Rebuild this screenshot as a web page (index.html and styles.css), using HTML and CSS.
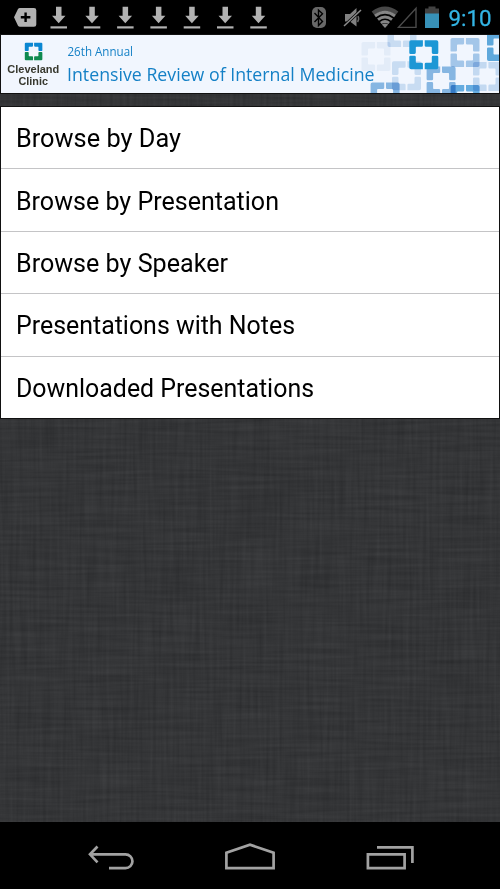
FILE: index.html
```html
<!DOCTYPE html>
<html lang="en">
<head>
<meta charset="utf-8">
<title>Intensive Review of Internal Medicine</title>
<link rel="stylesheet" href="styles.css">
</head>
<body>
<div class="screen">
  <header class="status">
    <svg class="status-icons" width="500" height="34" viewBox="0 0 500 34">
      <defs>
        <g id="download"><path d="M5.500 0h5.500v9h4L8.200 16.500 1.500 9h4z"/><path d="M0 19.500h16.500v2.200H0z"/></g>
      </defs>
      <path fill="#b2b2b2" d="M20 8h14q2.300 0 2.300 2.300v14.200q0 2.300-2.300 2.300H20q-1.200 0-2-1l-4-8.500 4-8.300q.7-1 2-1z"/>
      <path stroke="#000" stroke-width="2.400" d="M25.600 12.500v9.500M20.800 17.300h9.600"/>
      <g fill="#b2b2b2">
        <use href="#download" x="50.500" y="6.800"/><use href="#download" x="83.800" y="6.800"/><use href="#download" x="117.100" y="6.800"/><use href="#download" x="150.400" y="6.800"/><use href="#download" x="183.700" y="6.800"/><use href="#download" x="217" y="6.800"/><use href="#download" x="250.300" y="6.800"/>
      </g>
      <rect x="312" y="7" width="14" height="21" rx="5" fill="#686868"/>
      <path d="M314.500 13l8 8.500-4 4V10l4 3.700-8 8.300" fill="none" stroke="#000" stroke-width="1.400"/>
      <path fill="#808080" d="M345 14h5l6.500-6v18.500l-6.500-5h-5z"/>
      <path d="M344 26L361 10" stroke="#000" stroke-width="3"/>
      <path d="M344 26L361 10" stroke="#8a8a8a" stroke-width="1.500"/>
      <path fill="none" d="M358 16q1.500 3-.5 6" stroke="#666" stroke-width="1.500"/>
      <g fill="none">
        <path d="M373 13.200q12-9 24 0" stroke="#484848" stroke-width="4.400"/>
        <path d="M375 16q10-7.500 20 0" stroke="#858585" stroke-width="2.900"/>
        <path d="M378 19.600q7-5.200 14 0" stroke="#858585" stroke-width="3"/>
        <path d="M380.800 23q4.200-3 8.400 0" stroke="#858585" stroke-width="2.700"/>
      </g>
      <path fill="#858585" d="M381.800 24.500q3.200-2 6.400 0L385 28z"/>
      <path d="M398.500 27.400H416V8.200z" fill="none" stroke="#4b4b4b" stroke-width="1.400"/>
      <path fill="#424242" d="M425 8.500h3.500v-2h7v2h3.500V14h-14z"/>
      <path fill="#3791b8" d="M425 13.500h14V28h-14z"/>
      <text class="clock" x="448.500" y="26" textLength="43" lengthAdjust="spacingAndGlyphs">9:10</text>
    </svg>
  </header>

  <main class="content">
    <svg class="linen" width="500" height="789" aria-hidden="true">
      <defs>
        <filter id="warp" x="0" y="0" width="100%" height="100%" color-interpolation-filters="sRGB">
          <feTurbulence type="fractalNoise" baseFrequency="0.3 0.014" numOctaves="2" seed="4"/>
          <feColorMatrix values=".11 0 0 0 .151  .11 0 0 0 .155  .11 0 0 0 .163  0 0 0 0 1"/>
        </filter>
        <filter id="weft" x="0" y="0" width="100%" height="100%" color-interpolation-filters="sRGB">
          <feTurbulence type="fractalNoise" baseFrequency="0.014 0.3" numOctaves="2" seed="9"/>
          <feColorMatrix values=".11 0 0 0 .151  .11 0 0 0 .155  .11 0 0 0 .163  0 0 0 0 1"/>
        </filter>
      </defs>
      <rect width="500" height="789" filter="url(#warp)"/>
      <rect width="500" height="789" filter="url(#weft)" opacity=".5"/>
    </svg>

    <section class="banner">
      <svg class="banner-art" width="498" height="58" viewBox="1 35 498 58">
        <defs>
          <path id="bracket" d="M1.800 0H13.600V5.200Q13.600 6.500 12.300 6.500H7.300Q6.500 6.500 6.500 7.300V12.300Q6.500 13.600 5.200 13.600H1.200Q0 13.600 0 12.400V1.800Q0 0 1.800 0z"/>
          <g id="ring">
            <use href="#bracket"/>
            <use href="#bracket" transform="matrix(-1 0 0 1 29 0)"/>
            <use href="#bracket" transform="matrix(1 0 0 -1 0 29)"/>
            <use href="#bracket" transform="matrix(-1 0 0 -1 29 29)"/>
          </g>
        </defs>
        <g class="rings">
          <use href="#ring" x="361.500" y="42" fill="#e3ecf8"/>
          <use href="#ring" x="387.500" y="18" fill="#c8dcf2"/>
          <use href="#ring" x="392" y="61.300" fill="#c8dcf2"/>
          <use href="#ring" x="450.500" y="38" fill="#a3c6e9"/>
          <use href="#ring" x="473" y="62" fill="#c3d9f1"/>
          <use href="#ring" x="487" y="32" fill="#5fa8db"/>
          <use href="#ring" x="426.600" y="66.600" fill="#86b6e2"/>
          <use href="#ring" x="370.600" y="82.600" fill="#86b6e2"/>
          <use href="#ring" x="450.600" y="85" fill="#65ace0"/>
        </g>
        <use href="#ring" x="409.300" y="40.300" fill="#1c97d5"/>
        <g transform="translate(24.800 42.700) scale(.605)">
          <g fill="#0b87d2"><use href="#bracket"/><use href="#bracket" transform="matrix(-1 0 0 1 29 0)"/></g>
          <g fill="#0e8a50"><use href="#bracket" transform="matrix(1 0 0 -1 0 29)"/><use href="#bracket" transform="matrix(-1 0 0 -1 29 29)"/></g>
        </g>
        <g class="brand">
          <text x="7.300" y="73" textLength="52" lengthAdjust="spacingAndGlyphs">Cleveland</text>
          <text x="18.500" y="85.200" textLength="29.500" lengthAdjust="spacingAndGlyphs">Clinic</text>
        </g>
        <g class="event">
          <text class="edition" x="67.500" y="56" textLength="65.500" lengthAdjust="spacingAndGlyphs">26th Annual</text>
          <text class="title" x="67" y="81" textLength="307.500" lengthAdjust="spacingAndGlyphs">Intensive Review of Internal Medicine</text>
        </g>
      </svg>
    </section>

    <ul class="menu">
      <li><svg width="480" height="40"><text x="0" y="28" textLength="165" lengthAdjust="spacingAndGlyphs">Browse by Day</text></svg></li>
      <li><svg width="480" height="40"><text x="0" y="28" textLength="263" lengthAdjust="spacingAndGlyphs">Browse by Presentation</text></svg></li>
      <li><svg width="480" height="40"><text x="0" y="28" textLength="212" lengthAdjust="spacingAndGlyphs">Browse by Speaker</text></svg></li>
      <li><svg width="480" height="40"><text x="0" y="28" textLength="279" lengthAdjust="spacingAndGlyphs">Presentations with Notes</text></svg></li>
      <li><svg width="480" height="40"><text x="0" y="28" textLength="298" lengthAdjust="spacingAndGlyphs">Downloaded Presentations</text></svg></li>
    </ul>
  </main>

  <nav class="navbar">
    <svg width="500" height="66" viewBox="0 823 500 66" fill="none" stroke="#a2a2a2" stroke-width="2.700">
      <path d="M97.500 846.500L90 854.300l7.500 8M90 854.300h35.500a6.900 6.900 0 0 1 0 13.900H109"/>
      <path d="M226.400 868.200v-15.500l23.600-8 23.600 8v15.500z"/>
      <path d="M367.900 854.300h36.700v13.900h-36.700zM377 847.400h35.400V863"/>
    </svg>
  </nav>
</div>
</body>
</html>
```
FILE: styles.css
```css
body {
  margin: 0;
  background: #000;
}

svg {
  display: block;
}

.screen {
  width: 500px;
  height: 889px;
  display: flex;
  flex-direction: column;
  overflow: hidden;
  background: #000;
}

.status {
  height: 34px;
}

.clock {
  font: 22.500px Roboto, sans-serif;
  fill: #33b5e5;
  stroke: #33b5e5;
  stroke-width: .3px;
}

.content {
  position: relative;
  height: 788px;
  padding-top: 1px;
  overflow: hidden;
  background: #343537;
}

/* Woven backdrop behind the banner and the list */
.linen {
  position: absolute;
  inset: 0;
}

.banner,
.menu {
  position: relative;
  margin: 0 1px;
  box-shadow: 0 0 0 1px #111;
}

.banner {
  height: 58px;
  background: #f1f6fe;
}

.rings {
  isolation: isolate;
}

.rings use {
  mix-blend-mode: multiply;
}

.brand {
  font: bold 11px "Liberation Sans", sans-serif;
  fill: #38392f;
}

.event {
  font-family: "Open Sans", "Noto Sans", sans-serif;
  fill: #1480c6;
}

.edition {
  font-size: 12.500px;
}

.title {
  font-size: 18.500px;
}

.menu {
  margin-top: 14px;
  padding: 0;
  list-style: none;
  background: #fff;
}

.menu li {
  box-sizing: border-box;
  height: 62.400px;
  padding: 12.300px 0 0 14.500px;
  border-bottom: 1px solid #c4c4c6;
}

.menu li:last-child {
  height: 61.400px;
  border-bottom: 0;
}

.menu text {
  font: 25.500px Roboto, sans-serif;
  fill: #000;
}

.navbar {
  height: 66px;
  margin-top: 1px;
}
```
